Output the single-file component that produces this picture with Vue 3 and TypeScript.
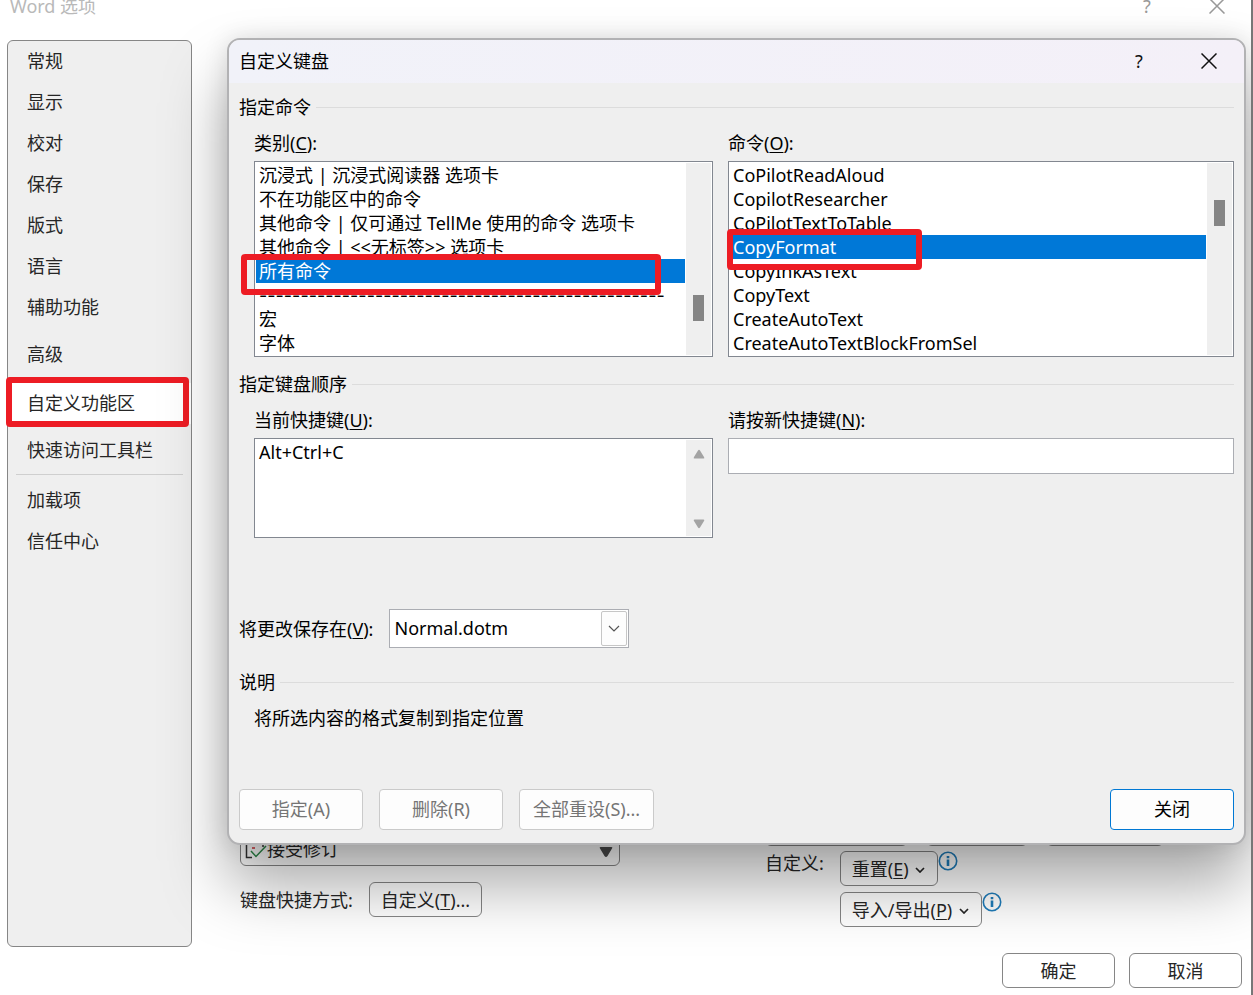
<script setup lang="ts">
import { ref } from 'vue'

interface NavItem {
  label: string
  spaced?: boolean
  active?: boolean
  ruled?: boolean
}

const navItems: NavItem[] = [
  { label: '常规' },
  { label: '显示' },
  { label: '校对' },
  { label: '保存' },
  { label: '版式' },
  { label: '语言' },
  { label: '辅助功能' },
  { label: '高级', spaced: true },
  { label: '自定义功能区', active: true },
  { label: '快速访问工具栏', spaced: true },
  { label: '加载项', ruled: true },
  { label: '信任中心' },
]

const divider = '-'.repeat(49)

const categories: string[] = [
  '沉浸式 | 沉浸式阅读器 选项卡',
  '不在功能区中的命令',
  '其他命令 | 仅可通过 TellMe 使用的命令 选项卡',
  '其他命令 | <<无标签>> 选项卡',
  '所有命令',
  divider,
  '宏',
  '字体',
]

const commands: string[] = [
  'CoPilotReadAloud',
  'CopilotResearcher',
  'CoPilotTextToTable',
  'CopyFormat',
  'CopyInkAsText',
  'CopyText',
  'CreateAutoText',
  'CreateAutoTextBlockFromSel',
]

const category = ref('所有命令')
const command = ref('CopyFormat')
const newShortcut = ref('')
const template = ref('Normal.dotm')
</script>

<template>
  <div class="window">
    <header class="window-bar">
      <span class="window-title">Word 选项</span>
      <button class="bar-button dim" type="button" aria-label="帮助">?</button>
      <button class="bar-button dim" type="button" aria-label="关闭窗口">
        <svg width="16" height="16" viewBox="0 0 16 16"><path d="M0.5 0.5L15.5 15.5M15.5 0.5L0.5 15.5" /></svg>
      </button>
    </header>

    <div class="body">
      <nav class="sidebar">
        <ul>
          <li
            v-for="item in navItems"
            :key="item.label"
            :class="{ spaced: item.spaced, active: item.active, ruled: item.ruled }"
          >
            <a href="#">{{ item.label }}</a>
            <span v-if="item.active" class="marker marker-nav"></span>
          </li>
        </ul>
      </nav>

      <main class="pane">
        <section class="pane-left">
          <div class="command-list">
            <svg class="accept-icon" width="22" height="20" viewBox="0 0 22 20">
              <path d="M7 18.5H1.5V0M10 4H18V8" fill="none" stroke="#333" stroke-width="1.5" />
              <path d="M5 5H8M7 9H10" stroke="#d13438" stroke-width="1.5" />
              <path d="M6 12L11 17.5L21 7" fill="none" stroke="#2d8a4a" stroke-width="1.5" />
            </svg>
            <span class="command-name">接受修订</span>
            <svg class="list-arrow" width="14" height="12" viewBox="0 0 14 12"><path d="M1.5 1H12.5Q14 1 13 2.5L8.5 10Q7 12 5.5 10L1 2.5Q0 1 1.5 1Z" fill="#4c4c4c" /></svg>
          </div>
          <div class="shortcut-row">
            <span>键盘快捷方式:</span>
            <button class="soft-button" type="button">自定义(<u>T</u>)...</button>
          </div>
        </section>

        <section class="pane-right">
          <div class="tab-buttons"><i></i><i></i><i></i></div>
          <div class="custom-row">
            <span class="custom-label">自定义:</span>
            <div class="custom-buttons">
              <div class="with-info">
                <button class="soft-button" type="button">
                  重置(<u>E</u>)
                  <svg width="10" height="6" viewBox="0 0 10 6"><path d="M1 1L5 5L9 1" /></svg>
                </button>
                <svg class="info" width="20" height="20" viewBox="0 0 20 20"><circle cx="10" cy="10" r="8.7" /><path d="M10 5V7.2M10 8.5V15" /></svg>
              </div>
              <div class="with-info">
                <button class="soft-button" type="button">
                  导入/导出(<u>P</u>)
                  <svg width="10" height="6" viewBox="0 0 10 6"><path d="M1 1L5 5L9 1" /></svg>
                </button>
                <svg class="info" width="20" height="20" viewBox="0 0 20 20"><circle cx="10" cy="10" r="8.7" /><path d="M10 5V7.2M10 8.5V15" /></svg>
              </div>
            </div>
          </div>
        </section>
      </main>
    </div>

    <footer class="window-footer">
      <button class="soft-button wide" type="button">确定</button>
      <button class="soft-button wide" type="button">取消</button>
    </footer>

    <div class="dialog" role="dialog" aria-labelledby="dialog-title">
      <header class="dialog-bar">
        <h1 id="dialog-title">自定义键盘</h1>
        <button class="bar-button" type="button" aria-label="帮助">?</button>
        <button class="bar-button" type="button" aria-label="关闭对话框">
          <svg width="16" height="16" viewBox="0 0 16 16"><path d="M0.5 0.5L15.5 15.5M15.5 0.5L0.5 15.5" /></svg>
        </button>
      </header>

      <div class="dialog-body">
        <h2>指定命令</h2>
        <div class="columns">
          <div class="field">
            <label for="category">类别(<u>C</u>):</label>
            <div class="box">
              <select id="category" v-model="category" size="8">
                <option
                  v-for="name in categories"
                  :key="name"
                  :value="name"
                  :class="{ divider: name === divider }"
                >{{ name }}</option>
              </select>
              <div class="track"><span class="thumb thumb-low"></span></div>
              <span class="marker marker-category"></span>
            </div>
          </div>
          <div class="field">
            <label for="command">命令(<u>O</u>):</label>
            <div class="box">
              <select id="command" v-model="command" size="8">
                <option v-for="name in commands" :key="name" :value="name">{{ name }}</option>
              </select>
              <div class="track"><span class="thumb thumb-high"></span></div>
              <span class="marker marker-command"></span>
            </div>
          </div>
        </div>

        <h2>指定键盘顺序</h2>
        <div class="columns">
          <div class="field">
            <label for="current">当前快捷键(<u>U</u>):</label>
            <div class="box">
              <textarea id="current" readonly rows="4">Alt+Ctrl+C</textarea>
              <div class="track arrows">
                <svg width="12" height="10" viewBox="0 0 12 10"><path d="M1.5 9.5H10.5Q12 9.5 11 8L7 1.5Q6 0 5 1.5L1 8Q0 9.5 1.5 9.5Z" /></svg>
                <svg width="12" height="10" viewBox="0 0 12 10"><path d="M1.5 0.5H10.5Q12 0.5 11 2L7 8.5Q6 10 5 8.5L1 2Q0 0.5 1.5 0.5Z" /></svg>
              </div>
            </div>
          </div>
          <div class="field">
            <label for="new-shortcut">请按新快捷键(<u>N</u>):</label>
            <input id="new-shortcut" v-model="newShortcut" type="text" />
          </div>
        </div>

        <div class="save-row">
          <label for="template">将更改保存在(<u>V</u>):</label>
          <div class="combo">
            <select id="template" v-model="template">
              <option>Normal.dotm</option>
            </select>
            <span class="combo-arrow">
              <svg width="12" height="8" viewBox="0 0 12 8"><path d="M1 1L6 6L11 1" /></svg>
            </span>
          </div>
        </div>

        <h2>说明</h2>
        <p class="description">将所选内容的格式复制到指定位置</p>

        <div class="actions">
          <button type="button" disabled>指定(A)</button>
          <button type="button" disabled>删除(R)</button>
          <button type="button" disabled>全部重设(S)...</button>
          <button class="primary" type="button">关闭</button>
        </div>
      </div>
    </div>
  </div>
</template>

<style>
body {
  margin: 0;
  background: #fff;
}
</style>

<style scoped>
* {
  box-sizing: border-box;
}

.window {
  position: relative;
  display: flex;
  flex-direction: column;
  min-height: 100vh;
  overflow: hidden;
  border-right: 2px solid #777;
  color: #262626;
  font: 18px/24px "Noto Sans", "Noto Sans CJK SC", sans-serif;
}

button,
select,
input,
textarea {
  margin: 0;
  color: inherit;
  font: inherit;
}

u {
  text-underline-offset: 2px;
  text-decoration-thickness: 1px;
}

.window-bar {
  display: flex;
  align-items: flex-start;
  height: 40px;
  padding: 0 26px 0 10px;
  line-height: 12px;
}

.window-title {
  flex: 1;
  color: #b9b9b9;
}

.bar-button {
  display: flex;
  align-items: center;
  justify-content: center;
  width: 16px;
  height: 24px;
  margin-left: 54px;
  padding: 0;
  border: 0;
  background: none;
  color: #111;
}

.bar-button svg {
  fill: none;
  stroke: currentColor;
  stroke-width: 1.5;
}

.bar-button.dim {
  height: 12px;
  color: #999;
}

.body {
  display: flex;
  flex: 1;
}

.sidebar {
  flex: none;
  width: 185px;
  margin-left: 7px;
  border: 1px solid #868686;
  border-radius: 6px;
  background: #efefef;
}

.sidebar ul {
  margin: 0;
  padding: 0;
  list-style: none;
}

.sidebar li {
  position: relative;
}

.sidebar a {
  display: block;
  padding-left: 19px;
  color: #262626;
  line-height: 41px;
  text-decoration: none;
}

.sidebar .spaced {
  margin-top: 6px;
}

.sidebar .active {
  margin-top: 8px;
  background: #fff;
}

.sidebar .ruled::before {
  content: "";
  display: block;
  height: 1px;
  margin: 3px 8px 5px;
  background: #cfcfcf;
}

.marker {
  position: absolute;
  border: 6px solid #ed1c24;
  border-radius: 4px;
  pointer-events: none;
}

.marker-nav {
  inset: -6px 2px -3px -2px;
}

.marker-category {
  top: 92px;
  right: 51px;
  left: -14px;
  height: 41px;
}

.marker-command {
  top: 67px;
  left: -2px;
  width: 195px;
  height: 41px;
}

.pane {
  display: flex;
  flex: 1;
  align-items: flex-end;
  padding: 0 88px 20px 48px;
}

.pane-left {
  width: 380px;
  margin-bottom: 10px;
}

.command-list {
  display: flex;
  align-items: center;
  height: 40px;
  margin-bottom: 16px;
  padding: 6px 6px 0 4px;
  border: 1px solid #868686;
  border-radius: 6px;
}

.command-name {
  flex: 1;
}

.list-arrow {
  margin-top: 6px;
}

.shortcut-row {
  display: flex;
  gap: 16px;
  align-items: center;
}

.soft-button {
  height: 35px;
  padding: 0 11px;
  border: 1px solid #868686;
  border-radius: 6px;
  background: #fff;
}

.soft-button svg {
  margin: 0 1px 3px 2px;
  fill: none;
  stroke: #262626;
  stroke-width: 1.7;
}

.wide {
  width: 113px;
}

.pane-right {
  margin-left: 145px;
}

.tab-buttons {
  display: flex;
  gap: 18px;
  margin-bottom: 5px;
}

.tab-buttons i {
  width: 102px;
  height: 36px;
  border: 1px solid #868686;
  border-radius: 6px;
}

.tab-buttons i:first-child {
  width: 143px;
}

.tab-buttons i:last-child {
  width: 118px;
}

.custom-row {
  display: flex;
  gap: 16px;
}

.custom-buttons {
  display: flex;
  flex-direction: column;
  gap: 6px;
}

.with-info {
  display: flex;
  align-items: flex-start;
}

.info {
  fill: none;
  stroke: #1f7dbb;
  stroke-width: 1.6;
}

.info path {
  stroke-width: 2.6;
}

.window-footer {
  display: flex;
  gap: 14px;
  justify-content: flex-end;
  padding: 6px 9px 7px 0;
}

.dialog {
  position: absolute;
  top: 38px;
  right: 5px;
  left: 227px;
  border: 2px solid #b2b2b4;
  border-radius: 13px;
  background: #efefef;
  box-shadow: 0 40px 64px rgba(0, 0, 0, 0.34), 0 0 24px rgba(0, 0, 0, 0.12);
  color: #000;
}

.dialog-bar {
  display: flex;
  align-items: center;
  height: 43px;
  padding: 0 27px 2px 10px;
  border-radius: 11px 11px 0 0;
  background: linear-gradient(90deg, #f1f2f9, #f4f0f8);
}

h1,
h2 {
  margin: 0;
  font-size: 18px;
  font-weight: 400;
}

h1 {
  flex: 1;
}

.dialog-body {
  padding: 12px 10px 13px;
}

h2 {
  display: flex;
  gap: 5px;
  align-items: center;
}

h2::after {
  content: "";
  flex: 1;
  height: 1px;
  background: #dcdcdc;
}

.columns {
  display: grid;
  grid-template-columns: 459fr 506fr;
  gap: 15px;
  padding: 12px 0 15px 15px;
}

.field {
  display: flex;
  flex-direction: column;
  gap: 6px;
}

.box {
  position: relative;
  display: flex;
  padding: 1px;
  border: 1px solid #828790;
  background: #fff;
}

.box select {
  flex: 1;
  min-width: 0;
  height: 192px;
  padding: 0;
  overflow: hidden;
  border: 0;
  border-radius: 0;
  outline: 0;
  background: #fff;
  scrollbar-width: none;
}

.box option {
  display: flex;
  align-items: flex-end;
  height: 24px;
  min-height: 24px;
  padding: 0 3px;
}

.box .divider {
  align-items: center;
  font-family: Inter, sans-serif;
}

.box option:checked {
  background: #0078d7 linear-gradient(#0078d7, #0078d7);
  color: #fff;
}

.track {
  display: flex;
  justify-content: center;
  width: 25px;
  margin-left: 1px;
  background: #efefef;
}

.thumb {
  width: 11px;
  height: 26px;
  background: #858585;
}

.thumb-low {
  margin-top: 132px;
}

.thumb-high {
  margin-top: 37px;
}

.arrows {
  flex-direction: column;
  align-items: center;
  justify-content: space-between;
  padding: 9px 0 7px;
  fill: #a3a3a3;
}

textarea {
  flex: 1;
  min-width: 0;
  height: 96px;
  padding: 0 3px;
  border: 0;
  outline: 0;
  resize: none;
}

input {
  height: 36px;
  padding: 0 4px;
  border: 1px solid #abadb3;
  border-radius: 0;
  outline: 0;
}

.save-row {
  display: flex;
  gap: 16px;
  align-items: center;
  margin: 56px 0 22px;
}

.combo {
  display: flex;
  width: 240px;
  height: 39px;
  padding: 1px;
  border: 1px solid #abadb3;
  background: #fff;
}

.combo select {
  flex: 1;
  padding: 0 3px 2px;
  border: 0;
  outline: 0;
  appearance: none;
  background: none;
}

.combo-arrow {
  display: flex;
  align-items: center;
  justify-content: center;
  width: 26px;
  border: 1px solid #c6c6c6;
  border-radius: 2px;
  background: #fdfdfd;
}

.combo-arrow svg {
  fill: none;
  stroke: #555;
  stroke-width: 1.2;
}

.description {
  margin: 12px 0 59px;
  padding-left: 15px;
}

.actions {
  display: flex;
  gap: 16px;
}

.actions button {
  min-width: 124px;
  height: 41px;
  padding: 0 13px 2px;
  border: 1px solid #cacaca;
  border-radius: 4px;
  background: #fdfdfd;
  color: #757575;
}

.actions .primary {
  margin-left: auto;
  border-color: #0078d4;
  color: #000;
}
</style>
